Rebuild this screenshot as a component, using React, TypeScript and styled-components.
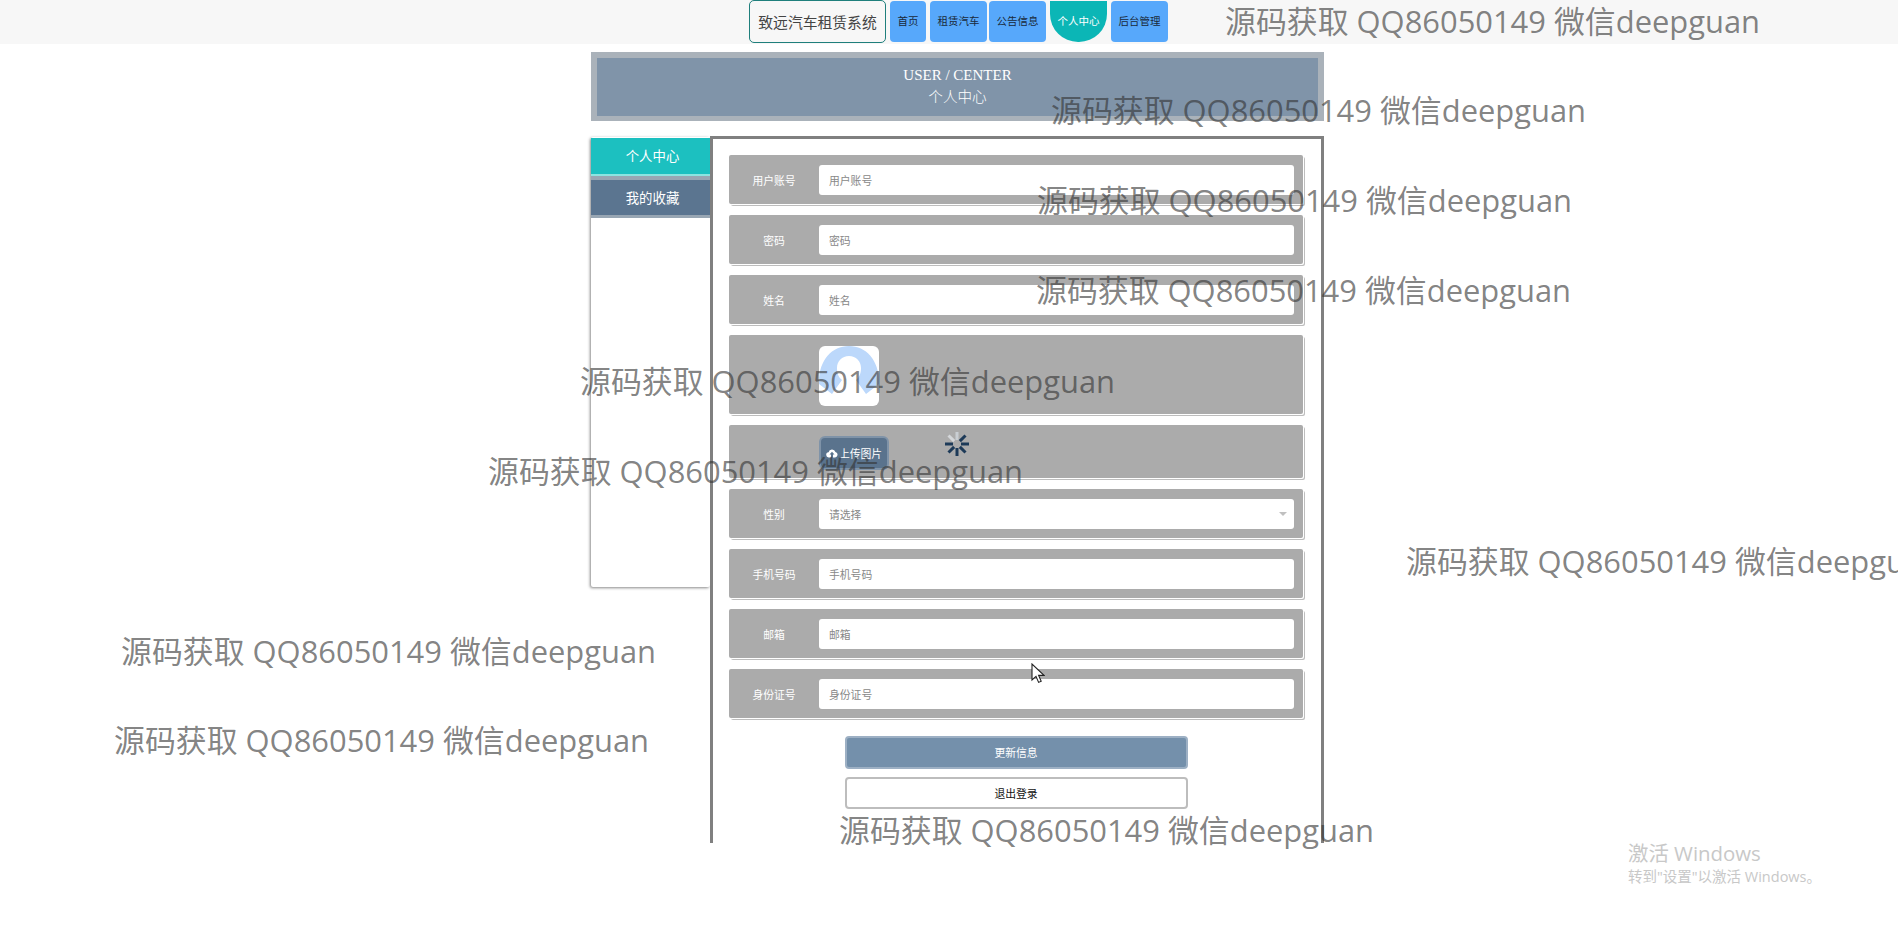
import React from 'react';
import styled, { createGlobalStyle } from 'styled-components';

const GlobalStyle = createGlobalStyle`
  html, body {
    margin: 0;
    padding: 0;
    background: #fff;
  }
  body {
    width: 1898px;
    height: 928px;
    overflow: hidden;
    font-family: "Noto Sans CJK SC", "Noto Sans", sans-serif;
  }
  * {
    box-sizing: border-box;
  }
`;

const Page = styled.div`
  position: relative;
  width: 1898px;
  height: 928px;
  overflow: hidden;
`;

const TopBar = styled.div`
  height: 44px;
  background: #f7f7f7;
  display: flex;
  align-items: flex-start;
  padding-left: 749px;
`;

const Brand = styled.div`
  width: 137px;
  height: 43px;
  margin-right: 4px;
  border: 1px solid #1f7f7c;
  border-radius: 5px;
  font-size: 14.8px;
  line-height: 41px;
  text-align: center;
  color: #444;
  white-space: nowrap;
`;

const NavItem = styled.div<{ $width: number; $gap: number; $active?: boolean }>`
  width: ${({ $width }) => $width}px;
  height: 41px;
  margin: 1px ${({ $gap }) => $gap}px 0 0;
  background: ${({ $active }) => ($active ? '#0bb6b6' : '#57a8fb')};
  color: ${({ $active }) => ($active ? '#fff' : '#1a2a3a')};
  border-radius: ${({ $active }) => ($active ? '0 0 28px 28px' : '4px')};
  font-size: 10.5px;
  line-height: 39px;
  text-align: center;
  white-space: nowrap;
`;

const Content = styled.div`
  width: 733px;
  margin: 8px 0 0 591px;
`;

const Banner = styled.div`
  height: 69px;
  border: 6px solid #aab2ba;
  border-bottom-width: 5px;
  background: #8094a9;
  color: #fff;
  text-align: center;
  padding-top: 7px;
`;

const BannerTitle = styled.div`
  font-family: "Liberation Serif", "Noto Serif", serif;
  font-size: 15px;
  line-height: 21px;
`;

const BannerSub = styled.div`
  font-size: 14.6px;
  font-weight: 300;
  line-height: 20px;
`;

const Columns = styled.div`
  display: flex;
  align-items: flex-start;
  margin-top: 15px;
`;

const Sidebar = styled.div`
  width: 119px;
  height: 450px;
  margin-top: 1px;
  background: #fff;
  border-radius: 2px;
  box-shadow: -1px 1px 3px #888;
  display: flex;
  flex-direction: column;
`;

const SideItem = styled.div<{ $active?: boolean }>`
  height: ${({ $active }) => ($active ? '38px' : '42px')};
  margin-top: ${({ $active }) => ($active ? '1px' : '0')};
  padding-left: 4px;
  color: #fff;
  font-size: 13.4px;
  text-align: center;
  line-height: 34px;
  background: ${({ $active }) => ($active ? '#1cc0c0' : '#5b7590')};
  border-bottom: ${({ $active }) => ($active ? '2px solid #8ce4e0' : '3px solid #98a6b3')};
  border-top: ${({ $active }) => ($active ? '0' : '4px solid #98a6b3')};
`;

const Main = styled.div`
  width: 614px;
  height: 707px;
  background: #fff;
  border: 3px solid #808080;
  border-bottom: 0;
  padding: 16px 0 0 16px;
`;

const Row = styled.div<{ $height?: number; $align?: string }>`
  width: 574px;
  height: ${({ $height }) => $height ?? 49}px;
  margin-bottom: 11px;
  background: #ababab;
  border-radius: 2px;
  box-shadow: 1px 1px 0 #fff, 2px 2px 0 #bdbdbd;
  display: flex;
  align-items: ${({ $align }) => $align ?? 'center'};
  padding-left: 90px;
  position: relative;
`;

const Label = styled.div`
  position: absolute;
  left: 0;
  top: 0;
  bottom: 0;
  width: 90px;
  display: flex;
  align-items: center;
  justify-content: center;
  color: #fff;
  font-size: 10.8px;
`;

const InputBox = styled.div`
  width: 475px;
  height: 30px;
  background: #fff;
  border-radius: 3px;
  padding-left: 10px;
  color: #888;
  font-size: 10.8px;
  line-height: 31px;
  position: relative;
`;

const Caret = styled.span`
  position: absolute;
  right: 7px;
  top: 13px;
  width: 0;
  height: 0;
  border: 4px solid transparent;
  border-top: 4px solid #c0c0c0;
`;

const Avatar = styled.div`
  width: 60px;
  height: 60px;
  margin-top: 11px;
  background: #fff;
  border-radius: 6px;
  overflow: hidden;
`;

const UploadButton = styled.div`
  width: 70px;
  height: 34px;
  margin-top: 11px;
  background: #5a738d;
  border: 2px solid #7f93a8;
  border-radius: 6px;
  color: #fff;
  font-size: 10.8px;
  display: flex;
  align-items: center;
  justify-content: center;
  gap: 1px;
`;

const Spinner = styled.svg`
  position: absolute;
  left: 214px;
  top: 5px;
`;

const Actions = styled.div`
  width: 574px;
  margin-top: 18px;
  display: flex;
  flex-direction: column;
  align-items: center;
  gap: 8px;
`;

const ActionButton = styled.div<{ $primary?: boolean }>`
  width: 343px;
  height: ${({ $primary }) => ($primary ? '33px' : '32px')};
  border-radius: 4px;
  border: 2px solid ${({ $primary }) => ($primary ? '#9db0c4' : '#bdbdbd')};
  background: ${({ $primary }) => ($primary ? '#7490ab' : '#fff')};
  color: ${({ $primary }) => ($primary ? '#fff' : '#111')};
  font-size: 10.8px;
  line-height: 28px;
  text-align: center;
`;

const Watermark = styled.div<{ $x: number; $y: number }>`
  position: absolute;
  left: ${({ $x }) => $x}px;
  top: ${({ $y }) => $y}px;
  font-family: "Open Sans", "Noto Sans CJK SC", sans-serif;
  font-size: 30.9px;
  line-height: 40px;
  color: rgba(50, 50, 50, 0.62);
  white-space: nowrap;
  pointer-events: none;
`;

const Activation = styled.div`
  position: absolute;
  left: 1628px;
  top: 840px;
  font-family: "Open Sans", "Noto Sans CJK SC", sans-serif;
  color: #c8c8c8;
`;

const ActivationTitle = styled.div`
  font-size: 20.4px;
  line-height: 26px;
`;

const ActivationHint = styled.div`
  font-size: 14.5px;
  line-height: 20px;
  margin-top: 1px;
`;

const Cursor = styled.svg`
  position: absolute;
  left: 1031px;
  top: 663px;
`;

const fields = [
  { label: '用户账号', hint: '用户账号' },
  { label: '密码', hint: '密码' },
  { label: '姓名', hint: '姓名' },
];

const moreFields = [
  { label: '手机号码', hint: '手机号码' },
  { label: '邮箱', hint: '邮箱' },
  { label: '身份证号', hint: '身份证号' },
];

const marks = [
  [1225, 1],
  [1051, 90],
  [1037, 180],
  [1036, 270],
  [580, 361],
  [488, 451],
  [1406, 541],
  [121, 631],
  [114, 720],
  [839, 810],
];

const spokes = [
  { angle: 0, color: '#c9ced3' },
  { angle: 45, color: '#1d3a58' },
  { angle: 90, color: '#1d3a58' },
  { angle: 135, color: '#1d3a58' },
  { angle: 180, color: '#1d3a58' },
  { angle: 225, color: '#1d3a58' },
  { angle: 270, color: '#1d3a58' },
  { angle: 315, color: '#d4d7da' },
];

function Field({ label, hint }: { label: string; hint: string }) {
  return (
    <Row>
      <Label>{label}</Label>
      <InputBox>{hint}</InputBox>
    </Row>
  );
}

export default function App() {
  return (
    <Page>
      <GlobalStyle />
      <TopBar>
        <Brand>致远汽车租赁系统</Brand>
        <NavItem $width={36} $gap={4}>首页</NavItem>
        <NavItem $width={57} $gap={2}>租赁汽车</NavItem>
        <NavItem $width={57} $gap={4}>公告信息</NavItem>
        <NavItem $width={57} $gap={4} $active>个人中心</NavItem>
        <NavItem $width={57} $gap={0}>后台管理</NavItem>
      </TopBar>
      <Content>
        <Banner>
          <BannerTitle>USER / CENTER</BannerTitle>
          <BannerSub>个人中心</BannerSub>
        </Banner>
        <Columns>
          <Sidebar>
            <SideItem $active>个人中心</SideItem>
            <SideItem>我的收藏</SideItem>
          </Sidebar>
          <Main>
            {fields.map((f) => (
              <Field key={f.label} {...f} />
            ))}
            <Row $height={79} $align="flex-start">
              <Avatar>
                <svg width="60" height="60" viewBox="0 0 60 60">
                  <path d="M0 36C0 14 13 0 30 0s30 14 30 36v2L47 48 37 34c4-3 5-8 5-12 0-7-5-12-12-12s-12 5-12 12c0 4 1 9 5 12L13 48 0 38z" fill="#bcd8fb" />
                </svg>
              </Avatar>
            </Row>
            <Row $height={53} $align="flex-start">
              <UploadButton>
                <svg width="12" height="10" viewBox="0 0 12 10">
                  <path d="M3 9.5a2.6 2.6 0 0 1-.4-5.2A3.5 3.5 0 0 1 9.4 4 2.8 2.8 0 0 1 9.2 9.5H7V6.5h1.5L6 3.8 3.5 6.5H5v3z" fill="#fff" />
                </svg>
                上传图片
              </UploadButton>
              <Spinner width="28" height="28" viewBox="-14 -14 28 28">
                {spokes.map((s) => (
                  <line
                    key={s.angle}
                    x1="0"
                    y1="-4"
                    x2="0"
                    y2="-12"
                    stroke={s.color}
                    strokeWidth="3"
                    transform={`rotate(${s.angle})`}
                  />
                ))}
              </Spinner>
            </Row>
            <Row>
              <Label>性别</Label>
              <InputBox>
                请选择
                <Caret />
              </InputBox>
            </Row>
            {moreFields.map((f) => (
              <Field key={f.label} {...f} />
            ))}
            <Actions>
              <ActionButton $primary>更新信息</ActionButton>
              <ActionButton>退出登录</ActionButton>
            </Actions>
          </Main>
        </Columns>
      </Content>
      {marks.map(([x, y]) => (
        <Watermark key={`${x}-${y}`} $x={x} $y={y}>
          源码获取 QQ86050149 微信deepguan
        </Watermark>
      ))}
      <Cursor width="14" height="22" viewBox="0 0 14 22">
        <path d="M1 1v16l4-3.6 2.6 6 2.6-1.1-2.6-5.9H13z" fill="#fff" stroke="#222" strokeWidth="1.1" />
      </Cursor>
      <Activation>
        <ActivationTitle>激活 Windows</ActivationTitle>
        <ActivationHint>转到"设置"以激活 Windows。</ActivationHint>
      </Activation>
    </Page>
  );
}
